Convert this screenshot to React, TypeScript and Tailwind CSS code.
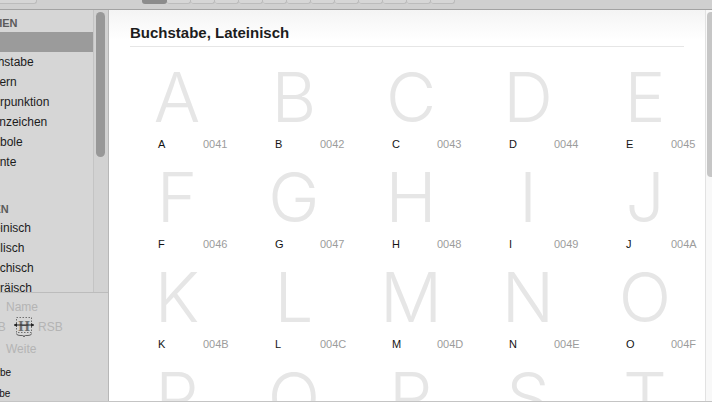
import React from 'react';

type SideItem = { label: string; cls: string; header?: boolean; selected?: boolean };

const categories: SideItem[] = [
  { label: 'KATEGORIEN', cls: 'ml-[-55px]', header: true },
  { label: 'Alle', cls: 'ml-[-30px]', selected: true },
  { label: 'Buchstabe', cls: 'ml-[-23px]' },
  { label: 'Ziffern', cls: 'ml-[-17px]' },
  { label: 'Interpunktion', cls: 'ml-[-20px]' },
  { label: 'Trennzeichen', cls: 'ml-[-25px]' },
  { label: 'Symbole', cls: 'ml-[-24px]' },
  { label: 'Akzente', cls: 'ml-[-27px]' },
];

const languages: SideItem[] = [
  { label: 'SPRACHEN', cls: 'ml-[-53px]', header: true },
  { label: 'Lateinisch', cls: 'ml-[-23px]' },
  { label: 'Kyrillisch', cls: 'ml-[-23px]' },
  { label: 'Griechisch', cls: 'ml-[-23px]' },
  { label: 'Hebräisch', cls: 'ml-[-22px]' },
];

const letters = 'ABCDEFGHIJKLMNOPQRST'.split('');

const SideRow: React.FC<{ item: SideItem }> = ({ item }) => {
  if (item.header) {
    return (
      <div className="h-[22px] pt-[6px] text-[11px] leading-[14px] font-bold text-[#5b5b5b] whitespace-nowrap">
        <span className={`inline-block ${item.cls}`}>{item.label}</span>
      </div>
    );
  }
  return (
    <div
      className={`h-[20px] flex items-center text-[12px] text-[#1c1c1c] whitespace-nowrap ${
        item.selected ? 'bg-[#9b9b9b]' : ''
      }`}
    >
      <span className={`inline-block ${item.cls} ${item.selected ? 'text-transparent' : ''}`}>{item.label}</span>
    </div>
  );
};

const MetricsIcon: React.FC = () => (
  <svg width="22" height="22" viewBox="0 0 22 22">
    <rect x="3.5" y="1.5" width="15" height="15" fill="none" stroke="#555" strokeWidth="0.8" strokeDasharray="1.5 1.5" />
    <text x="11" y="14.5" textAnchor="middle" fontFamily="'Liberation Serif', serif" fontWeight="bold" fontSize="15" fill="#6e6e6e">
      H
    </text>
    <line x1="1" y1="9" x2="21" y2="9" stroke="#222" strokeWidth="1" />
    <path d="M1 9 L4 7 L4 11 Z" fill="#222" />
    <path d="M21 9 L18 7 L18 11 Z" fill="#222" />
    <path d="M3.5 17.5 Q3.5 19.5 7 19.5 L9.5 19.5 Q11 19.5 11 21 Q11 19.5 12.5 19.5 L15 19.5 Q18.5 19.5 18.5 17.5" fill="none" stroke="#444" strokeWidth="0.8" />
  </svg>
);

const GlyphCell: React.FC<{ ch: string }> = ({ ch }) => {
  const code = ch.charCodeAt(0).toString(16).toUpperCase().padStart(4, '0');
  return (
    <div className="h-[100px]">
      <div className="w-[94px] h-[70px] text-center text-[69px] leading-[70px] font-light text-[#e6e6e6] font-['Inter',sans-serif]">
        {ch}
      </div>
      <div className="mt-[5px] h-[14px] flex items-center pl-[28px] text-[11px]">
        <span className="w-[45px] text-[#141414]">{ch}</span>
        <span className="text-[#9c9c9c]">{code}</span>
      </div>
    </div>
  );
};

const App: React.FC = () => {
  return (
    <div className="w-[712px] h-[402px] overflow-hidden flex flex-col bg-[#d3d3d3] font-['Liberation_Sans',Arial,sans-serif]">
      {/* Toolbar edge */}
      <div className="h-[10px] flex items-start border-b border-[#a3a3a3] bg-[#d0d0d0]">
        <div className="w-[37px] h-[4px] border-r border-b border-[#bcbcbc] rounded-br-[3px] bg-[#d6d6d6]" />
        <div className="w-[105px]" />
        <div className="w-[25px] h-[4px] rounded-b-[3px] bg-[#8c8c8c]" />
        {Array.from({ length: 12 }).map((_, i) => (
          <div key={i} className="w-[24px] h-[4px] border-r border-b border-[#bcbcbc] rounded-b-[3px] bg-[#d6d6d6]" />
        ))}
      </div>

      <div className="flex flex-1 min-h-0 border-b border-[#c4c4c4]">
        {/* Sidebar */}
        <aside className="w-[109px] flex flex-col border-r border-[#b7b7b7] bg-[#d6d6d6]">
          <div className="flex flex-1 min-h-0">
            <div className="w-[93px] overflow-hidden">
              {categories.map(item => (
                <SideRow key={item.label} item={item} />
              ))}
              <div className="h-[24px]" />
              {languages.map(item => (
                <SideRow key={item.label} item={item} />
              ))}
            </div>
            <div className="w-[15px] border-l border-[#c4c4c4] bg-[#d2d2d2] pt-[2px] pl-[2px]">
              <div className="w-[9px] h-[145px] rounded-full bg-[#989898]" />
            </div>
          </div>

          <div className="h-[109px] border-t border-[#bcbcbc] bg-[#d6d6d6] text-[12px] overflow-hidden">
            <div className="h-[14px] mt-[7px] pl-[6px] leading-[14px] text-[#b4b4b4]">Name</div>
            <div className="h-[22px] mt-[2px] flex items-center whitespace-nowrap text-[#b4b4b4]">
              <span className="inline-block ml-[-17px] w-[30px]">LSB</span>
              <MetricsIcon />
              <span className="ml-[3px]">RSB</span>
            </div>
            <div className="h-[14px] mt-[4px] pl-[6px] leading-[14px] text-[#b4b4b4]">Weite</div>
            <div className="h-[20px] mt-[6px] flex items-center text-[10px] text-[#111] whitespace-nowrap">
              <span className="inline-block ml-[-15px]">Farbe</span>
            </div>
            <div className="h-[20px] mt-[1px] flex items-center text-[10px] text-[#111] whitespace-nowrap">
              <span className="inline-block ml-[-27px]">Vorgabe</span>
            </div>
          </div>
        </aside>

        {/* Glyph grid */}
        <main className="flex-1 flex min-w-0 bg-white">
          <div className="flex-1 min-w-0 overflow-hidden bg-[linear-gradient(to_bottom,#f4f4f4,#ffffff_30px)]">
            <div className="ml-[21px] mr-[21px] pt-[14px] pb-[4px] border-b border-[#e6e6e6]">
              <h1 className="text-[15px] leading-[18px] font-bold text-[#1d1d1d]">Buchstabe, Lateinisch</h1>
            </div>
            <div className="ml-[21px] mt-[15px] grid grid-cols-[repeat(5,117px)] w-max">
              {letters.map(ch => (
                <GlyphCell key={ch} ch={ch} />
              ))}
            </div>
          </div>
          <div className="w-[7px] border-l border-[#e2e2e2] bg-[#f8f8f8] pt-[2px] pl-[1px]">
            <div className="w-[8px] h-[165px] rounded-full bg-[#c6c6c6]" />
          </div>
        </main>
      </div>
    </div>
  );
};

export default App;
